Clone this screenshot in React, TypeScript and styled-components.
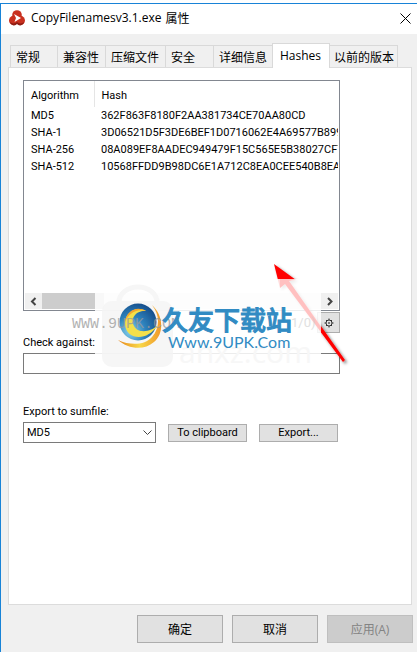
import React from "react";
import styled, { createGlobalStyle } from "styled-components";

const GlobalStyle = createGlobalStyle`
  * { box-sizing: border-box; }
  html, body { margin: 0; background: #fff; overflow: hidden; }
  body, button, input, select {
    font-family: "Open Sans", "Noto Sans CJK SC", sans-serif;
    font-size: 12px;
    color: #000;
  }
`;

const formFont = `Roboto, "Liberation Sans", sans-serif`;

const Page = styled.div`
  height: 100vh;
  padding-top: 3px;
  overflow: hidden;
`;

const Dialog = styled.main`
  display: flex;
  flex-direction: column;
  min-height: 100%;
  background: #f0f0f0;
  border-top: 1px solid #1883d7;
  border-left: 1px solid #1883d7;
`;

const TitleBar = styled.header`
  display: flex;
  align-items: center;
  gap: 6px;
  height: 30px;
  padding: 0 6px 2px 8px;
  background: #fff;
`;

const Title = styled.h1`
  display: flex;
  flex: 1;
  gap: 4px;
  margin: 0;
  font-size: 12px;
  font-weight: 400;
  white-space: nowrap;
`;

const CloseButton = styled.button`
  display: flex;
  padding: 0;
  border: 0;
  background: none;
`;

const Tabs = styled.div`
  display: flex;
  align-items: flex-end;
  height: 33px;
  padding-left: 9px;
`;

const Tab = styled.button<{ $width: number; $active?: boolean }>`
  position: relative;
  flex: none;
  width: ${(p) => p.$width}px;
  height: ${(p) => (p.$active ? 25 : 22)}px;
  margin-bottom: ${(p) => (p.$active ? -1 : 0)}px;
  padding: 0 0 ${(p) => (p.$active ? 2 : 0)}px ${(p) => (p.$active ? 7 : 5)}px;
  border: 1px solid #d9d9d9;
  border-right-width: ${(p) => (p.$active ? 1 : 0)}px;
  border-bottom: 0;
  background: ${(p) => (p.$active ? "#fff" : "#f0f0f0")};
  text-align: left;
  white-space: nowrap;
  z-index: ${(p) => (p.$active ? 1 : 0)};

  &:last-child {
    padding-left: 4px;
    border-left: 0;
    border-right-width: 1px;
  }
`;

const Panel = styled.section`
  flex: 1;
  margin: 0 5px 0 7px;
  padding: 12px 71px 12px 14px;
  border: 1px solid #dcdcdc;
  background: #fff;
  font-family: ${formFont};
  font-size: 11px;
`;

const HashArea = styled.div`
  position: relative;
`;

const ListBox = styled.div`
  display: flex;
  flex-direction: column;
  height: 231px;
  border: 1px solid #828790;
  overflow: hidden;
`;

const HashTable = styled.table`
  flex: 1;
  display: block;
  border-collapse: collapse;
  overflow: hidden;
  margin-right: 1px;
  line-height: 17px;

  th, td {
    padding: 0 0 0 7px;
    font-weight: 400;
    text-align: left;
    white-space: nowrap;
  }
  th {
    height: 26px;
    padding-top: 2px;
  }
  th:first-child {
    min-width: 70px;
    border-right: 1px solid #e5e5e5;
  }
`;

const ScrollBar = styled.div`
  display: flex;
  justify-content: space-between;
  height: 16px;
  margin: 0 1px 1px;
  background: #f0f0f0;
`;

const ScrollArrow = styled.button`
  display: grid;
  place-items: center;
  width: 17px;
  padding: 0;
  border: 0;
  background: #f0f0f0;
`;

const ScrollThumb = styled.div`
  width: 62px;
  margin-right: auto;
  background: #cdcdcd;
`;

const Tools = styled.div`
  display: flex;
  justify-content: flex-end;
  height: 22px;
  padding-top: 1px;
`;

const PushButton = styled.button`
  display: grid;
  place-items: center;
  padding: 0;
  border: 1px solid #adadad;
  background: #e1e1e1;
  white-space: nowrap;

  &:disabled {
    border-color: #bfbfbf;
    background: #ccc;
    color: #838383;
  }
`;

const GearButton = styled(PushButton)`
  width: 23px;
`;

const ActionButton = styled(PushButton)`
  width: 79px;
  height: 18px;
  font-family: ${formFont};
  font-size: 11px;
`;

const FooterButton = styled(PushButton)`
  width: 86px;
  height: 28px;
`;

const Label = styled.label`
  display: block;
  line-height: 20px;
`;

const CheckInput = styled.input`
  display: block;
  width: 100%;
  height: 21px;
  border: 1px solid #7a7a7a;
  background: #fff;
  font-family: ${formFont};
  font-size: 11px;
`;

const ExportGroup = styled.div`
  margin-top: 28px;
`;

const ExportRow = styled.div`
  display: flex;
  align-items: center;
  gap: 12px;
`;

const SelectBox = styled.div`
  display: grid;
  align-items: center;
  width: 133px;
  height: 21px;
  border: 1px solid #7a7a7a;

  > * { grid-area: 1 / 1; }
  > svg { justify-self: end; margin-right: 2px; pointer-events: none; }
`;

const Select = styled.select`
  appearance: none;
  width: 100%;
  height: 19px;
  padding: 0 3px;
  border: 0;
  background: #fff;
  font-family: ${formFont};
  font-size: 11px;
`;

const Footer = styled.footer`
  display: flex;
  justify-content: flex-end;
  gap: 9px;
  padding: 10px 4px 9px;
`;

const Watermark = styled.svg`
  position: absolute;
  left: 48px;
  top: 180px;
  width: 282px;
  height: 112px;
  pointer-events: none;
`;

const tabs = [
  { name: "常规", width: 47 },
  { name: "兼容性", width: 48 },
  { name: "压缩文件", width: 60 },
  { name: "安全", width: 48 },
  { name: "详细信息", width: 59 },
  { name: "Hashes", width: 58, active: true },
  { name: "以前的版本", width: 68 },
];

const hashes = [
  ["MD5", "362F863F8180F2AA381734CE70AA80CD"],
  ["SHA-1", "3D06521D5F3DE6BEF1D0716062E4A69577B899"],
  ["SHA-256", "08A089EF8AADEC949479F15C565E5B38027CF7"],
  ["SHA-512", "10568FFDD9B98DC6E1A712C8EA0CEE540B8EA"],
];

function AppIcon() {
  return (
    <svg width="16" height="16" viewBox="0 0 16 16" aria-hidden="true">
      <g fill="#c9301f">
        <circle cx="8" cy="5" r="4.8" />
        <circle cx="4.6" cy="10.4" r="4.6" />
        <circle cx="11.4" cy="10.4" r="4.6" />
      </g>
      <path d="M1 12a4 4 0 0 0 7 2 4 4 0 0 0 7-2 5 5 0 0 1-7 0 5 5 0 0 1-7 0" fill="#8e1d14" />
      <path d="M5 4 12 8 5.500 12l1.500-4z" fill="#fff" />
    </svg>
  );
}

function Chevron({ d }: { d: string }) {
  return (
    <svg width="11" height="11" viewBox="0 0 11 11" fill="none" stroke="#444" strokeWidth="2" aria-hidden="true">
      <path d={d} />
    </svg>
  );
}

function SiteWatermark() {
  return (
    <Watermark viewBox="71 260 282 112" aria-hidden="true">
      <defs>
        <radialGradient id="globe" cx="0.3" cy="0.75" r="0.8">
          <stop offset="0" stopColor="#8cd5ee" />
          <stop offset="0.5" stopColor="#2e83bd" />
          <stop offset="1" stopColor="#164f8c" />
        </radialGradient>
        <linearGradient id="flame" x1="0" y1="0" x2="1" y2="0">
          <stop offset="0" stopColor="#e8871c" />
          <stop offset="0.5" stopColor="#f8d848" />
          <stop offset="1" stopColor="#f0982a" />
        </linearGradient>
        <filter id="shade" x="-30%" y="-30%" width="160%" height="160%">
          <feDropShadow dx="2" dy="2" stdDeviation="1.5" floodOpacity="0.5" />
        </filter>
      </defs>
      <g filter="url(#shade)">
        <path d="M274 264 296 280 289 281 345 360 343 362 285 284 280 288z" fill="#f00" />
      </g>
      <rect x="95" y="279" width="226" height="93" fill="#fff" fillOpacity="0.86" />
      <rect x="102" y="301" width="71" height="66" rx="10" fill="#f4f4f4" fillOpacity="0.8" />
      <path d="M119 302a19 15 0 0 1 38 0" fill="none" stroke="#f6f6f6" strokeWidth="5" />
      <text x="179" y="363" fontFamily="Open Sans, sans-serif" fontSize="30" fill="#f7f7f7">anxz.com</text>
      <circle cx="138" cy="322" r="18.5" fill="url(#globe)" />
      <path
        d="M152 305C164 316 164 334 154 342C144 351 128 349 118 340C131 346 145 345 152 337C160 328 160 315 152 305Z"
        fill="url(#flame)"
      />
      <path
        d="M146 311C135 305 124 314 125 325C127 340 147 342 158 325C151 332 138 334 134 326C130 317 137 310 146 311Z"
        fill="#f3e04a"
      />
      <path d="M146 311C137 305 126 311 125 322C128 314 136 308 146 311Z" fill="#f4a72e" />
      <text x="72" y="328" fontFamily="Liberation Mono, monospace" fontSize="15" fill="#999" fillOpacity="0.75">WWW.9UPK.COM</text>
      <text x="291" y="327" fontFamily="Roboto, sans-serif" fontSize="13" fill="#e1e1e1">1/0)</text>
      <text x="162" y="330" fontFamily="Noto Sans CJK SC, sans-serif" fontSize="26" fontWeight="500" fill="#318bc3" stroke="#318bc3">久友下载站</text>
      <text x="168" y="348" fontFamily="Lato, sans-serif" fontSize="16" fill="#318bc3">Www.9UPK.Com</text>
      <path d="M280 279h15l-6 2 32 46v5l-36-48-5 4z" fill="#f00" fillOpacity="0.12" />
    </Watermark>
  );
}

export default function App() {
  return (
    <Page>
      <GlobalStyle />
      <Dialog>
        <TitleBar>
          <AppIcon />
          <Title>
            <span>CopyFilenamesv3.1.exe </span>
            <span>属性</span>
          </Title>
          <CloseButton aria-label="关闭">
            <svg width="11" height="11" viewBox="0 0 11 11" stroke="#000" aria-hidden="true">
              <path d="M.5.5l10 10M10.500.5l-10 10" />
            </svg>
          </CloseButton>
        </TitleBar>
        <Tabs role="tablist">
          {tabs.map((t) => (
            <Tab key={t.name} role="tab" aria-selected={!!t.active} $width={t.width} $active={t.active}>
              {t.name}
            </Tab>
          ))}
        </Tabs>
        <Panel role="tabpanel">
          <HashArea>
            <ListBox>
              <HashTable>
                <thead>
                  <tr><th>Algorithm</th><th>Hash</th></tr>
                </thead>
                <tbody>
                  {hashes.map(([name, value]) => (
                    <tr key={name}><td>{name}</td><td>{value}</td></tr>
                  ))}
                </tbody>
              </HashTable>
              <ScrollBar>
                <ScrollArrow aria-label="Scroll left"><Chevron d="M7.500 2 4 5.500 7.500 9" /></ScrollArrow>
                <ScrollThumb />
                <ScrollArrow aria-label="Scroll right"><Chevron d="M4 2l3.500 3.500L4 9" /></ScrollArrow>
              </ScrollBar>
            </ListBox>
            <Tools>
              <GearButton aria-label="Settings">
                <svg width="10" height="10" viewBox="0 0 10 10" fill="none" stroke="#333" aria-hidden="true">
                  <circle cx="5" cy="5" r="3" />
                  <circle cx="5" cy="5" r="0.5" />
                  <path d="M5 .5V2M5 8v1.500M.5 5H2M8 5h1.500M2 2l1 1M7 7l1 1M2 8l1-1M7 3l1-1" />
                </svg>
              </GearButton>
            </Tools>
            <Label htmlFor="check">Check against:</Label>
            <CheckInput id="check" />
            <SiteWatermark />
          </HashArea>
          <ExportGroup>
            <Label htmlFor="format">Export to sumfile:</Label>
            <ExportRow>
              <SelectBox>
                <Select id="format" defaultValue="MD5">
                  {hashes.map(([name]) => <option key={name}>{name}</option>)}
                </Select>
                <svg width="11" height="11" viewBox="0 0 11 11" fill="none" stroke="#444" aria-hidden="true">
                  <path d="M1.500 3.500l4 4 4-4" />
                </svg>
              </SelectBox>
              <ActionButton>To clipboard</ActionButton>
              <ActionButton>Export...</ActionButton>
            </ExportRow>
          </ExportGroup>
        </Panel>
        <Footer>
          <FooterButton>确定</FooterButton>
          <FooterButton>取消</FooterButton>
          <FooterButton disabled>应用(A)</FooterButton>
        </Footer>
      </Dialog>
    </Page>
  );
}
